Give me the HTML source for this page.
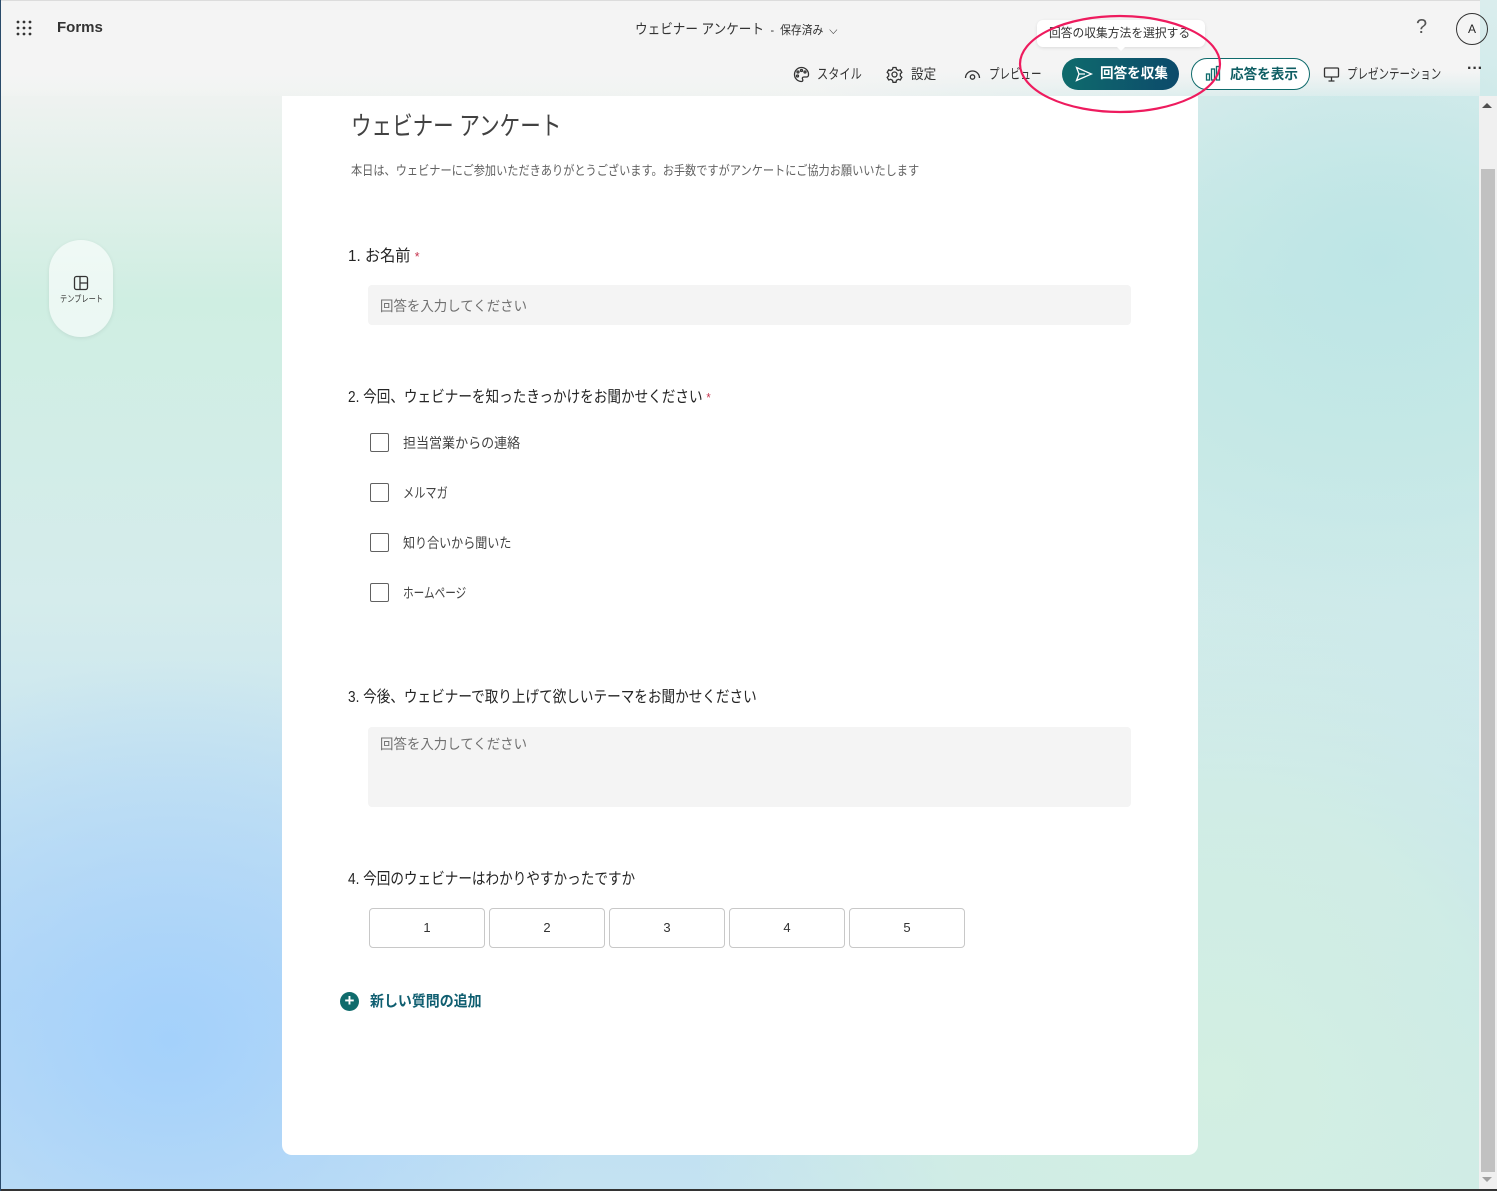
<!DOCTYPE html>
<html><head><meta charset="utf-8"><style>
*{margin:0;padding:0;box-sizing:border-box}
body{width:1497px;height:1191px;overflow:hidden;position:relative;font-family:"Liberation Sans","Noto Sans CJK JP",sans-serif;color:#242424;
background:
radial-gradient(ellipse 420px 380px at 170px 1040px,#a4d1fb 0%,rgba(170,210,250,0.6) 45%,rgba(180,215,245,0) 100%),
radial-gradient(ellipse 600px 500px at 1380px 260px,#bde5e6 0%,rgba(195,230,232,0) 100%),
linear-gradient(180deg,#f2f4f3 60px,#eef2f0 100px,#cfeee2 300px,#d5ecec 600px,#b9dcf5 1000px,#c4e2f2 1191px);}
.br{position:absolute;left:700px;top:450px;width:797px;height:741px;background:radial-gradient(ellipse 70% 70% at 65% 85%,#d3efe2 0%,rgba(211,239,226,.8) 50%,rgba(211,239,226,0) 100%)}
.hdr{position:absolute;left:0;top:0;width:1480px;height:96px;background:linear-gradient(180deg,#f4f4f4 0,#f4f4f4 70px,rgba(244,244,244,0.3) 96px);border-top:1px solid #dcdcdc}
.t{position:absolute;white-space:nowrap}
.n{display:inline-block;transform:scaleX(.83);transform-origin:left center;white-space:nowrap}
.card{position:absolute;left:282px;top:96px;width:916px;height:1059px;background:#fff;border-radius:0 0 10px 10px}
.inp{position:absolute;left:86px;width:763px;background:#f4f4f4;border-radius:4px;color:#707070;font-size:14px;padding:11px 12px}
.cb{position:absolute;left:88px;width:19px;height:19px;border:1px solid #616161;border-radius:2px}
.opt{position:absolute;left:121px;font-size:14px;color:#424242}
.q{position:absolute;left:66px;font-size:16px;color:#242424}
.r{position:absolute;top:812px;width:116px;height:40px;border:1px solid #c8c8c8;border-radius:4px;text-align:center;line-height:38px;font-size:13px;color:#333}
.sb{position:absolute;left:1479px;top:96px;width:18px;height:1094px;background:#f0f0f0}
.btn{position:absolute;top:58px;height:32px;border-radius:16px;font-size:14px;font-weight:bold;line-height:30px}
.tb{position:absolute;top:64px;font-size:14px;color:#333}
</style></head><body>
<div class="br"></div>
<div class="hdr"></div>
<svg class="t" style="left:16px;top:20px" width="18" height="16"><g fill="#333"><circle cx="2" cy="2" r="1.4"/><circle cx="8" cy="2" r="1.4"/><circle cx="14" cy="2" r="1.4"/><circle cx="2" cy="8" r="1.4"/><circle cx="8" cy="8" r="1.4"/><circle cx="14" cy="8" r="1.4"/><circle cx="2" cy="14" r="1.4"/><circle cx="8" cy="14" r="1.4"/><circle cx="14" cy="14" r="1.4"/></g></svg>
<div class="t" style="left:57px;top:19px;font-size:15px;font-weight:bold;color:#333">Forms</div>
<div class="t" style="left:635px;top:19px;font-size:14px;color:#333"><span class="n" style="transform:scaleX(.9)">ウェビナー アンケート <span style="font-size:12px">&nbsp;-&nbsp; 保存済み &nbsp;⌵</span></span></div>
<div class="t" style="left:1416px;top:16px;font-size:20px;color:#555;font-weight:300">?</div>
<div class="t" style="left:1456px;top:13px;width:32px;height:32px;border:1px solid #333;border-radius:50%;text-align:center;line-height:30px;font-size:12px">A</div>
<div class="t" style="left:1037px;top:20px;width:168px;height:27px;background:#fff;border-radius:6px;font-size:12px;line-height:27px;color:#333;box-shadow:0 1px 3px rgba(0,0,0,.1);padding-left:12px"><span class="n" style="transform:scaleX(.98)">回答の収集方法を選択する</span></div>
<div class="t" style="left:1115px;top:45px;width:0;height:0;border:6px solid transparent;border-top-color:#fff"></div>
<svg class="t" style="left:793px;top:66px" width="17" height="17" fill="none" stroke="#333" stroke-width="1.3"><path d="M8.5 1.5a7 7 0 1 0 0 14c1.5 0 1.5-1.5 1-2.5s0-2 1.5-2h2.5a2 2 0 0 0 2-2 7 7 0 0 0-7-7.5z"/><circle cx="5" cy="6" r="1"/><circle cx="8.5" cy="4.5" r="1"/><circle cx="12" cy="6" r="1"/><circle cx="4.5" cy="10" r="1"/></svg>
<div class="tb" style="left:817px"><span class="n" style="transform:scaleX(.8)">スタイル</span></div>
<svg class="t" style="left:886px;top:66px" width="17" height="17" fill="none" stroke="#333" stroke-width="1.3"><circle cx="8.5" cy="8.5" r="2.5"/><path d="M7 1.5h3l.5 2 1.8 1 2-.7 1.5 2.6-1.5 1.4v2.2l1.5 1.4-1.5 2.6-2-.7-1.8 1-.5 2H7l-.5-2-1.8-1-2 .7-1.5-2.6 1.5-1.4V7.8L1.2 6.4l1.5-2.6 2 .7 1.8-1z"/></svg>
<div class="tb" style="left:911px"><span class="n" style="transform:scaleX(.9)">設定</span></div>
<svg class="t" style="left:964px;top:68px" width="17" height="12" fill="none" stroke="#333" stroke-width="1.3"><path d="M1.5 10a7 7 0 0 1 14 0"/><circle cx="8.5" cy="9" r="2.2"/></svg>
<div class="tb" style="left:989px"><span class="n" style="transform:scaleX(.75)">プレビュー</span></div>
<div class="btn" style="left:1062px;width:117px;background:linear-gradient(90deg,#0f6b6c,#0c4a6b);color:#fff;padding-left:38px"><span class="n" style="transform:scaleX(.97)">回答を収集</span></div>
<svg class="t" style="left:1075px;top:66px" width="18" height="16" fill="none" stroke="#fff" stroke-width="1.3"><path d="M1.5 1.5l15 6.5-15 6.5 2.5-6.5z M4 8h6"/></svg>
<div class="btn" style="left:1191px;width:119px;border:1px solid #0f6b6c;background:#fff;color:#0f5e63;padding-left:38px"><span class="n" style="transform:scaleX(.97)">応答を表示</span></div>
<svg class="t" style="left:1205px;top:65px" width="16" height="17" fill="none" stroke="#0f6b6c" stroke-width="1.3"><rect x="1.5" y="9" width="3" height="6"/><rect x="6.5" y="4" width="3" height="11"/><rect x="11.5" y="1.5" width="3" height="13.5"/></svg>
<svg class="t" style="left:1323px;top:66px" width="17" height="16" fill="none" stroke="#333" stroke-width="1.3"><rect x="1.5" y="2" width="14" height="9" rx="1"/><path d="M8.5 11v4M5.5 15h6"/></svg>
<div class="tb" style="left:1347px"><span class="n" style="transform:scaleX(.75)">プレゼンテーション</span></div>
<div class="t" style="left:1467px;top:60px;font-size:16px;color:#333;font-weight:bold">···</div>

<div class="t" style="left:49px;top:240px;width:64px;height:97px;border-radius:32px;background:rgba(255,255,255,.6);box-shadow:0 1px 4px rgba(0,0,0,.08)"></div>
<svg class="t" style="left:73px;top:275px" width="16" height="16" fill="none" stroke="#333" stroke-width="1.3"><rect x="1.5" y="1.5" width="13" height="13" rx="2"/><path d="M7 1.5v13M7 8h7.5"/></svg>
<div class="t" style="left:60px;top:292px;font-size:9px;color:#333"><span class="n" style="transform:scaleX(.8)">テンプレート</span></div>

<div class="card">
<div class="t" style="left:69px;top:10px;font-size:26px;color:#424242"><span class="n" style="transform:scaleX(.79)">ウェビナー アンケート</span></div>
<div class="t" style="left:69px;top:64px;font-size:13px;color:#616161"><span class="n" style="transform:scaleX(.86)">本日は、ウェビナーにご参加いただきありがとうございます。お手数ですがアンケートにご協力お願いいたします</span></div>
<div class="q" style="top:146px"><span class="n" style="transform:scaleX(.95)">1. お名前 <span style="color:#c4314b;font-size:13px">*</span></span></div>
<div class="inp" style="top:189px;height:40px"><span class="n" style="transform:scaleX(.96)">回答を入力してください</span></div>
<div class="q" style="top:287px"><span class="n" style="transform:scaleX(.85)">2. 今回、ウェビナーを知ったきっかけをお聞かせください <span style="color:#c4314b;font-size:13px">*</span></span></div>
<div class="cb" style="top:337px"></div><div class="opt" style="top:337px"><span class="n" style="transform:scaleX(.93)">担当営業からの連絡</span></div>
<div class="cb" style="top:387px"></div><div class="opt" style="top:387px"><span class="n" style="transform:scaleX(.8)">メルマガ</span></div>
<div class="cb" style="top:437px"></div><div class="opt" style="top:437px"><span class="n" style="transform:scaleX(.86)">知り合いから聞いた</span></div>
<div class="cb" style="top:487px"></div><div class="opt" style="top:487px"><span class="n" style="transform:scaleX(.76)">ホームページ</span></div>
<div class="q" style="top:587px"><span class="n" style="transform:scaleX(.85)">3. 今後、ウェビナーで取り上げて欲しいテーマをお聞かせください</span></div>
<div class="inp" style="top:631px;height:80px;padding-top:7px"><span class="n" style="transform:scaleX(.96)">回答を入力してください</span></div>
<div class="q" style="top:769px"><span class="n" style="transform:scaleX(.85)">4. 今回のウェビナーはわかりやすかったですか</span></div>
<div class="r" style="left:87px">1</div><div class="r" style="left:207px">2</div><div class="r" style="left:327px">3</div><div class="r" style="left:447px">4</div><div class="r" style="left:567px">5</div>
<div class="t" style="left:58px;top:896px;width:19px;height:19px;border-radius:50%;background:#0f6b6c;color:#fff;text-align:center;line-height:18px;font-size:17px;font-weight:bold">+</div>
<div class="t" style="left:88px;top:894px;font-size:15px;font-weight:bold;color:#0f5e70"><span class="n" style="transform:scaleX(.93)">新しい質問の追加</span></div>
</div>

<svg class="t" style="left:1018px;top:13px;z-index:5" width="206" height="104"><ellipse cx="102" cy="51" rx="100" ry="48" fill="none" stroke="#ee1b5e" stroke-width="2.2"/></svg>

<div class="sb"></div>
<div class="t" style="left:1482px;top:103px;width:0;height:0;border:5px solid transparent;border-bottom:5px solid #505050;border-top:0"></div>
<div class="t" style="left:1481px;top:169px;width:14px;height:1003px;background:#c1c1c1"></div>
<div class="t" style="left:1482px;top:1177px;width:0;height:0;border:5px solid transparent;border-top:5px solid #a0a0a0;border-bottom:0"></div>
<div class="t" style="left:0;top:1189px;width:1497px;height:2px;background:#333"></div>
<div class="t" style="left:0;top:0;width:1px;height:1191px;background:#2a4a6a"></div>
</body></html>
